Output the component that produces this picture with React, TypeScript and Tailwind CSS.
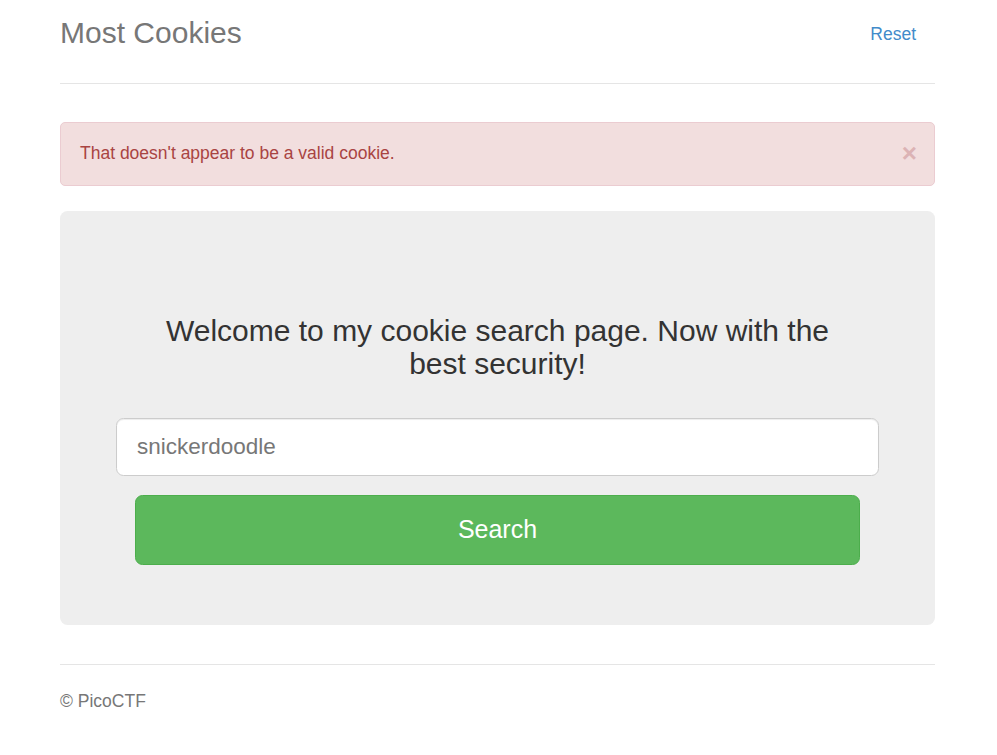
import React from "react";

export default function App() {
  return (
    <div
      className="min-h-[755px] bg-white text-[#333]"
      style={{ fontFamily: '"Liberation Sans", Arial, Helvetica, sans-serif' }}
    >
      <div className="ml-[60px] w-[875px]">
        {/* Header */}
        <div className="flex items-start justify-between border-b border-[#e5e5e5] pt-[8px] pb-[24px]">
          <h3 className="m-0 text-[30px] leading-[50px] font-normal text-[#777]">Most Cookies</h3>
          <a href="#" className="mt-[1px] px-[19px] py-[12.5px] text-[17.5px] leading-[25px] text-[#428bca]">
            Reset
          </a>
        </div>

        {/* Alert */}
        <div className="mt-[38px] flex items-center rounded-[5px] border border-[#ebccd1] bg-[#f2dede] pl-[19px] pr-[17px] pt-[18px] pb-[19px] text-[17.5px] leading-[25px] text-[#a94442]">
          <span className="flex-1">That doesn't appear to be a valid cookie.</span>
          <span className="text-[26px] font-bold leading-[25px] text-[#dcb3b5]">×</span>
        </div>

        {/* Jumbotron */}
        <div className="mt-[25px] rounded-[7.5px] bg-[#eeeeee] px-[75px] pt-[60px] pb-[60px] text-center">
          <h3 className="mx-auto mt-[43px] mb-0 max-w-[700px] text-[30px] leading-[33px] font-normal text-[#333]">
            Welcome to my cookie search page. Now with the best security!
          </h3>
          <div className="mt-[38px] -mx-[19px]">
            <div className="h-[57.5px] rounded-[7.5px] border border-[#ccc] bg-white px-[20px] text-left text-[22.5px] leading-[55.5px] text-[#777] shadow-[inset_0_1px_1px_rgba(0,0,0,0.075)]">
              snickerdoodle
            </div>
          </div>
          <button className="mt-[19.5px] flex h-[70px] w-full items-center justify-center rounded-[7.5px] border border-[#4cae4c] bg-[#5cb85c] text-[25px] text-white">
            Search
          </button>
        </div>

        {/* Footer */}
        <div className="mt-[39px] border-t border-[#e5e5e5] pt-[24px] text-[17.5px] leading-[25px] text-[#777]">
          © PicoCTF
        </div>
      </div>
    </div>
  );
}
